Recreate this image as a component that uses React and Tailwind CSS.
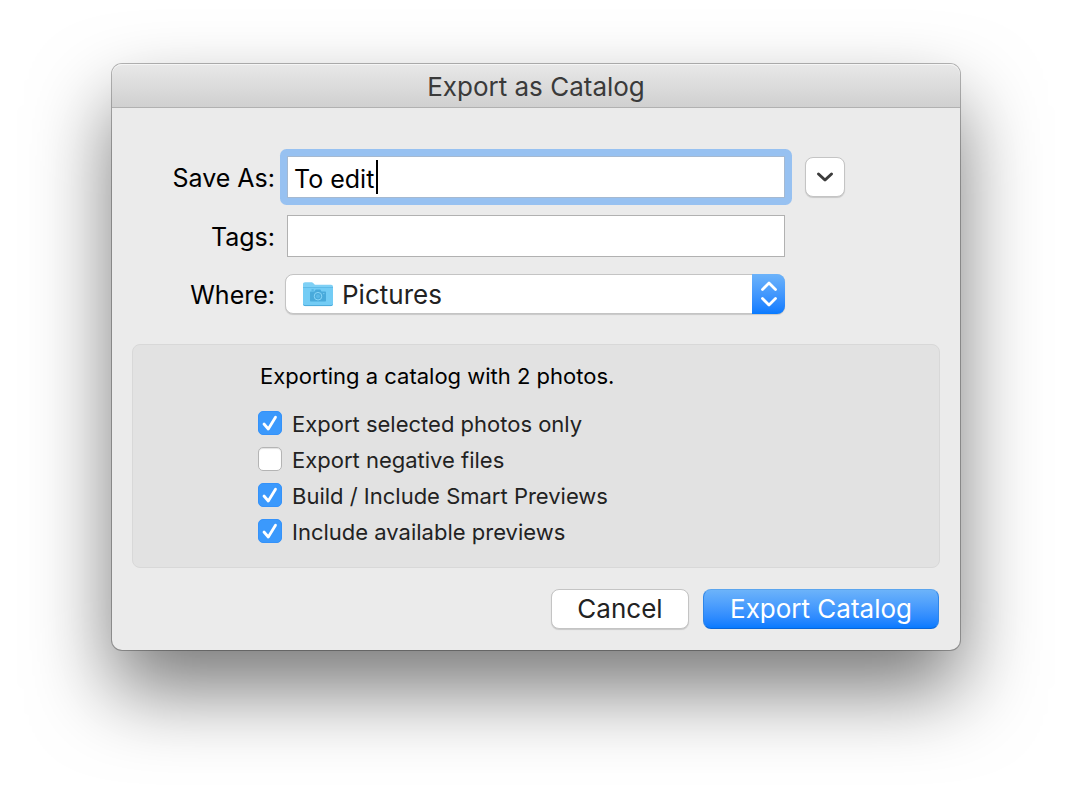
import React, { useState } from 'react';

const OPTIONS = [
  { id: 'selected', label: 'Export selected photos only', checked: true },
  { id: 'negatives', label: 'Export negative files', checked: false },
  { id: 'smart', label: 'Build / Include Smart Previews', checked: true },
  { id: 'previews', label: 'Include available previews', checked: true },
];

function PicturesFolder() {
  return (
    <svg width="30" height="25" viewBox="0 0 30 25" fill="none" aria-hidden="true">
      <path d="M0 2.2C0 1 .8.3 2 .3h6.2c1 0 1.5.3 2.2 1l1.5 1.4H28c1.2 0 2 .8 2 2V22c0 1.200-.8 2-2 2H2c-1.200 0-2-.8-2-2Z" fill="#7fd0f5" />
      <path d="M0 6h30v16c0 1.200-.8 2-2 2H2c-1.200 0-2-.8-2-2Z" fill="#73ccf5" />
      <path d="M0 5.500h30" stroke="#5fbbe8" strokeWidth="1" />
      <path d="M.5 22.600c.3.700.800 1 1.500 1h26c.7 0 1.200-.3 1.500-1" stroke="#4ba9da" strokeWidth="1" />
      <path d="M8 9.500h3.500l1.200-2h4.600l1.200 2H22c.6 0 1 .4 1 1v8c0 .6-.4 1-1 1H8c-.6 0-1-.4-1-1v-8c0-.6.400-1 1-1Z" fill="#49aadb" />
      <path d="M8.500 8h2.200" stroke="#49aadb" strokeWidth="1.200" />
      <circle cx="15" cy="14.200" r="3.800" fill="#49aadb" stroke="#8ad6f8" strokeWidth="1" />
      <circle cx="15" cy="14.200" r="2" fill="#5bb9e8" />
      <circle cx="20.800" cy="11.600" r=".7" fill="#7fd0f5" />
    </svg>
  );
}

function Option({ id, label, checked }) {
  return (
    <div className="flex h-9 items-center gap-2.5">
      <span className="relative size-6 shrink-0">
        <input
          id={id}
          type="checkbox"
          defaultChecked={checked}
          className="peer block size-6 appearance-none rounded-[5px] border border-[#b4b4b4] bg-white shadow-[inset_0_1px_1px_rgba(0,0,0,0.12)] checked:border-[#3492fa] checked:bg-[#3b99fc] checked:shadow-none"
        />
        <svg
          className="pointer-events-none absolute inset-0 hidden peer-checked:block"
          width="24"
          height="24"
          viewBox="0 0 24 24"
          fill="none"
          stroke="#fff"
          strokeWidth="2.800"
          strokeLinecap="round"
          strokeLinejoin="round"
          aria-hidden="true"
        >
          <path d="M6 13l4.300 5L17.500 6.300" />
        </svg>
      </span>
      <label htmlFor={id} className="pt-0.5 text-[22px] leading-7 text-[#222]">
        {label}
      </label>
    </div>
  );
}

export default function App() {
  const [name, setName] = useState('To edit');
  const [tags, setTags] = useState('');

  return (
    <main className="min-h-screen bg-white px-4 py-16 font-['Inter','Liberation_Sans',sans-serif] text-black">
      <form
        onSubmit={e => e.preventDefault()}
        className="mx-auto max-w-[848px] rounded-[10px] bg-[#ebebeb] shadow-[0_0_0_1px_rgba(0,0,0,0.28),0_40px_80px_rgba(0,0,0,0.53)]"
      >
        {/* Title bar */}
        <header className="flex h-11 items-center justify-center rounded-t-[10px] border-b border-[#b1b1b1] bg-linear-to-b from-[#e8e8e8] to-[#d0d0d0] shadow-[inset_0_1px_0_#f5f5f5]">
          <h1 className="pt-0.5 text-[26px] leading-8 text-[#3a3a3a]">Export as Catalog</h1>
        </header>

        {/* File fields */}
        <div className="grid grid-cols-[163px_minmax(0,1fr)_48px] items-center gap-x-3 gap-y-[17px] pt-12 pr-[115px]">
          <label htmlFor="name" className="pt-0.5 text-right text-[25px] leading-8">Save As:</label>
          <div className="relative rounded-[2px] bg-[#97c1f1] ring-[7px] ring-[#97c1f1]">
            <input
              id="name"
              value={name}
              onChange={e => setName(e.target.value)}
              className="block h-[42px] w-full border border-[#a5b9d1] bg-white px-1.5 pt-1 text-[25px] caret-transparent outline-none"
            />
            {/* Text cursor */}
            <span className="absolute top-1 left-[89px] h-[34px] w-0.5 bg-black" />
          </div>
          <button
            type="button"
            aria-label="Expand"
            className="ml-auto flex size-10 items-center justify-center rounded-lg border border-[#c4c4c4] bg-white shadow-[0_1px_1px_rgba(0,0,0,0.15)]"
          >
            <svg width="18" height="12" viewBox="0 0 18 12" fill="none" stroke="#3c3c3c" strokeWidth="3" strokeLinecap="round" strokeLinejoin="round" aria-hidden="true">
              <path d="M2.500 3L9 9l6.500-6" />
            </svg>
          </button>

          <label htmlFor="tags" className="pt-0.5 text-right text-[25px] leading-8">Tags:</label>
          <input
            id="tags"
            value={tags}
            onChange={e => setTags(e.target.value)}
            className="block h-[42px] w-full border border-[#b1b1b1] bg-white px-1.5 pt-1 text-[25px] outline-none"
          />
          <span />

          <label htmlFor="where" className="pt-0.5 text-right text-[25px] leading-8">Where:</label>
          <div className="relative -ml-0.5">
            <select
              id="where"
              className="block h-10 w-full appearance-none rounded-lg border border-[#c4c4c4] bg-white pl-14 text-[26px] text-[#222] shadow-[0_1px_1px_rgba(0,0,0,0.15)] outline-none"
            >
              <option>Pictures</option>
            </select>
            <span className="pointer-events-none absolute top-2 left-[18px]">
              <PicturesFolder />
            </span>
            <span className="pointer-events-none absolute inset-y-0 right-0 flex w-[33px] items-center justify-center rounded-r-lg bg-linear-to-b from-[#6cb3fa] to-[#067aff]">
              <svg width="18" height="28" viewBox="0 0 18 28" fill="none" stroke="#fff" strokeWidth="2.800" strokeLinecap="round" strokeLinejoin="round" aria-hidden="true">
                <path d="M2.500 9.500L9 3l6.500 6.500M2.500 18.500L9 25l6.500-6.500" />
              </svg>
            </span>
          </div>
        </div>

        {/* Catalog options */}
        <section className="mx-5 mt-[30px] rounded-lg border border-[#d8d8d8] bg-[#e2e2e2] pt-[17px] pb-[18px] pl-[125px]">
          <p className="pl-0.5 text-[22px] leading-7">Exporting a catalog with 2 photos.</p>
          <div className="mt-[15px]">
            {OPTIONS.map(o => (
              <Option key={o.id} {...o} />
            ))}
          </div>
        </section>

        <footer className="flex justify-end gap-3.5 px-[21px] py-[21px]">
          <button
            type="button"
            className="h-10 w-[138px] rounded-lg border border-[#c4c4c4] bg-white text-[26px] leading-8 text-[#222] shadow-[0_1px_1px_rgba(0,0,0,0.15)]"
          >
            Cancel
          </button>
          <button
            type="submit"
            className="h-10 w-[236px] rounded-lg border border-[#2f86e8] border-t-[#5ba5ee] border-b-[#0a66d8] bg-linear-to-b from-[#6cb3fa] to-[#067aff] text-[26px] leading-8 text-white"
          >
            Export Catalog
          </button>
        </footer>
      </form>
    </main>
  );
}
